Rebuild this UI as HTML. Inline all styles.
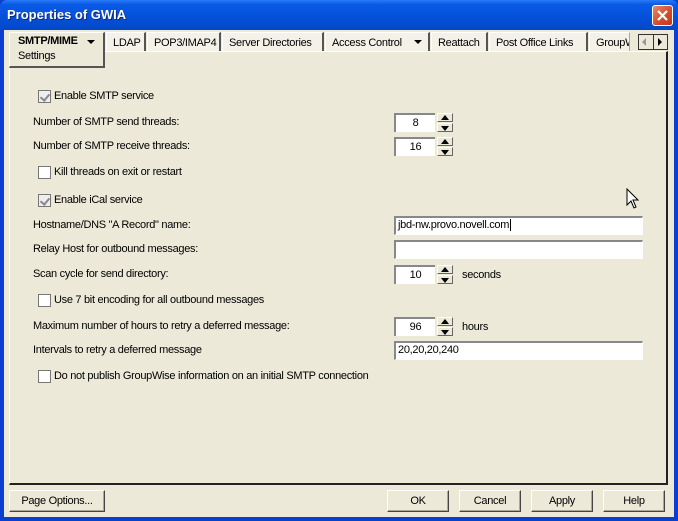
<!DOCTYPE html>
<html><head><style>
*{margin:0;padding:0;box-sizing:border-box}
body{width:678px;height:521px;overflow:hidden;font-family:"Liberation Sans",Arial,sans-serif;font-size:11px;letter-spacing:-0.3px;color:#000;position:relative;background:#0a3fd0}
.a{position:absolute;white-space:nowrap}
#win{position:absolute;left:4px;top:30px;width:670px;height:487px;background:#ece9d8}
#title{position:absolute;left:0;top:0;width:678px;height:30px;background:linear-gradient(#2a7bf5 0,#0a5ae6 15%,#0450d8 60%,#0447c8 100%);border-radius:7px 7px 0 0}
#title span{position:absolute;left:7px;top:7px;color:#fff;font-weight:bold;font-size:13px;letter-spacing:0;text-shadow:1px 1px #0a2a8a}
#close{position:absolute;left:652px;top:5px;width:21px;height:21px;background:linear-gradient(135deg,#e8886a,#d4482a 60%,#c23a1a);border:1px solid #fff;border-radius:3px}
.tab{position:absolute;top:32px;height:19px;background:#f4f2e8;border-right:2px solid #555;border-top:1px solid #fff;border-left:1px solid #fff;padding:4px 0 0 6px}
#panel{position:absolute;left:9px;top:51px;width:659px;height:434px;border-left:1px solid #fff;border-top:1px solid #fff;border-right:2px solid #222;border-bottom:2px solid #222}
.cb{position:absolute;width:13px;height:13px;background:#fff;border:1px solid #777;left:38px}
.cb.on{background:#eee}
.cb.on::after{content:"";position:absolute;left:3px;top:1px;width:4px;height:7px;border:solid #888;border-width:0 2px 2px 0;transform:rotate(40deg)}
.in{position:absolute;left:394px;height:19px;background:#fff;border-top:2px solid #888;border-left:2px solid #888;border-bottom:1px solid #fff;border-right:1px solid #fff;padding:1px 2px}
.spin{position:absolute;left:394px;width:41px;height:19px;background:#fff;border-top:2px solid #888;border-left:2px solid #888;text-align:center;padding-top:2px}
.sb{position:absolute;left:437px;width:16px;height:19px}
.sb div{height:9px;background:#ece9d8;border:1px solid;border-color:#fff #666 #666 #fff;position:relative;margin-bottom:1px}
.up::after{content:"";position:absolute;left:3px;top:1px;border:4px solid transparent;border-bottom:5px solid #000;border-top:0}
.dn::after{content:"";position:absolute;left:3px;top:2px;border:4px solid transparent;border-top:5px solid #000;border-bottom:0}
.btn{position:absolute;top:490px;height:22px;background:#ece9d8;border:1px solid;border-color:#fff #444 #444 #fff;box-shadow:inset -1px -1px #aca899;text-align:center;padding-top:4px}
</style></head><body>
<div id="title"><span>Properties of GWIA</span></div>
<div id="close"><svg width="19" height="19"><path d="M5 5L14 14M14 5L5 14" stroke="#fff" stroke-width="2.2"/></svg></div>
<div id="win"></div>
<div id="panel"></div>
<div class="a" style="left:9px;top:32px;width:96px;height:36px;background:#ece9d8;border-top:1px solid #fff;border-left:1px solid #fff;border-right:2px solid #555;border-bottom:2px solid #555"></div>
<div class="a" style="left:18px;top:35px;font-weight:bold">SMTP/MIME</div>
<div class="a" style="left:87px;top:40px;border:4px solid transparent;border-top:4px solid #000"></div>
<div class="a" style="left:18px;top:50px">Settings</div>
<div class="tab" style="left:106px;width:40px">LDAP</div>
<div class="tab" style="left:147px;width:74px">POP3/IMAP4</div>
<div class="tab" style="left:222px;width:102px">Server Directories</div>
<div class="tab" style="left:325px;width:105px">Access Control</div>
<div class="a" style="left:414px;top:40px;border:4px solid transparent;border-top:4px solid #000"></div>
<div class="tab" style="left:431px;width:57px">Reattach</div>
<div class="tab" style="left:489px;width:99px">Post Office Links</div>
<div class="tab" style="left:589px;width:41px;overflow:hidden;border-right:1px solid #aaa">GroupWise</div>
<div class="a" style="left:638px;top:34px;width:30px;height:16px;border:1px solid #333;background:#ece9d8"></div>
<div class="a" style="left:642px;top:38px;border:4px solid transparent;border-right:4px solid #999;border-left:0"></div>
<div class="a" style="left:653px;top:35px;width:1px;height:14px;background:#333"></div>
<div class="a" style="left:658px;top:38px;border:4px solid transparent;border-left:4px solid #000;border-right:0"></div>

<div class="cb on" style="top:90px"></div><div class="a" style="left:54px;top:90px">Enable SMTP service</div>
<div class="a" style="left:33px;top:116px">Number of SMTP send threads:</div>
<div class="spin" style="top:113px">8</div><div class="sb" style="top:113px"><div class="up"></div><div class="dn"></div></div>
<div class="a" style="left:33px;top:140px">Number of SMTP receive threads:</div>
<div class="spin" style="top:137px">16</div><div class="sb" style="top:137px"><div class="up"></div><div class="dn"></div></div>
<div class="cb" style="top:166px"></div><div class="a" style="left:54px;top:166px">Kill threads on exit or restart</div>
<div class="cb on" style="top:194px"></div><div class="a" style="left:54px;top:194px">Enable iCal service</div>
<div class="a" style="left:33px;top:219px">Hostname/DNS "A Record" name:</div>
<div class="in" style="top:216px;width:249px">jbd-nw.provo.novell.com<span style="border-left:1px solid #000;margin-left:1px"></span></div>
<div class="a" style="left:33px;top:243px">Relay Host for outbound messages:</div>
<div class="in" style="top:240px;width:249px"></div>
<div class="a" style="left:33px;top:268px">Scan cycle for send directory:</div>
<div class="spin" style="top:265px">10</div><div class="sb" style="top:265px"><div class="up"></div><div class="dn"></div></div>
<div class="a" style="left:462px;top:269px">seconds</div>
<div class="cb" style="top:294px"></div><div class="a" style="left:54px;top:294px">Use 7 bit encoding for all outbound messages</div>
<div class="a" style="left:33px;top:320px">Maximum number of hours to retry a deferred message:</div>
<div class="spin" style="top:317px">96</div><div class="sb" style="top:317px"><div class="up"></div><div class="dn"></div></div>
<div class="a" style="left:462px;top:321px">hours</div>
<div class="a" style="left:33px;top:344px">Intervals to retry a deferred message</div>
<div class="in" style="top:341px;width:249px">20,20,20,240</div>
<div class="cb" style="top:370px"></div><div class="a" style="left:54px;top:370px">Do not publish GroupWise information on an initial SMTP connection</div>

<svg class="a" style="left:626px;top:188px" width="14" height="22"><path d="M1 1L1 17L5 13L8 20L10 19L7 12L12 12Z" fill="#fff" stroke="#000"/></svg>

<div class="btn" style="left:9px;width:96px">Page Options...</div>
<div class="btn" style="left:387px;width:62px">OK</div>
<div class="btn" style="left:459px;width:62px">Cancel</div>
<div class="btn" style="left:531px;width:62px">Apply</div>
<div class="btn" style="left:603px;width:62px">Help</div>
</body></html>
